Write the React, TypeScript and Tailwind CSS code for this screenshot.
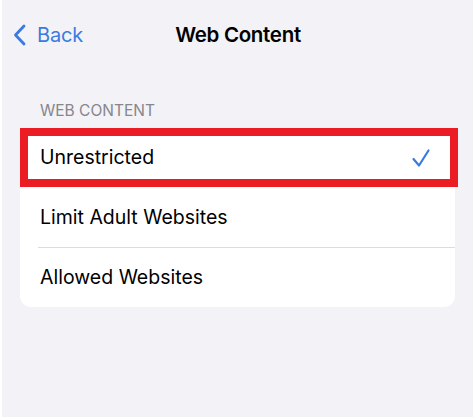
import React from "react";

export default function App() {
  const font = { fontFamily: "Inter, 'Liberation Sans', sans-serif" };
  return (
    <div className="w-[474px] h-[419px] bg-white pl-[2px] pr-[1px] pb-[2px]" style={font}>
      <div className="h-full bg-[#f2f2f7] flex flex-col">
        <div className="relative h-[70px] flex items-center">
          <div className="flex items-center pl-[10px] text-[#3a7be0]">
            <svg width="16" height="24" viewBox="0 0 16 24" className="mr-[9px]">
              <path d="M12 3 L3.5 12 L12 21" fill="none" stroke="#3a7be0" strokeWidth="2.8" strokeLinecap="round" strokeLinejoin="round" />
            </svg>
            <span className="text-[20px] leading-none tracking-[-0.2px]">Back</span>
          </div>
          <div className="absolute left-0 right-0 flex justify-center pl-[1px]">
            <span className="text-[20.5px] font-semibold text-black leading-none tracking-[-0.3px]">Web Content</span>
          </div>
        </div>
        <div className="pl-[38px] pt-[33px] pb-[9px] text-[15.5px] text-[#86868b] leading-none">WEB CONTENT</div>
        <div className="ml-[18px] mr-[18px] bg-white rounded-[11px] flex flex-col">
          <div className="h-[59px] border-[8px] border-[#ec1c24] flex items-center justify-between pl-[12px] pr-[19px] -mr-[3px]">
            <span className="text-[19.5px] text-black pt-[2px]">Unrestricted</span>
            <svg width="20" height="20" viewBox="0 0 20 20" className="mt-[2px]">
              <path d="M2.5 11 L8 17.5 L17.5 2.5" fill="none" stroke="#3a7be0" strokeWidth="2.2" strokeLinecap="round" strokeLinejoin="round" />
            </svg>
          </div>
          <div className="h-[60px] flex items-center pl-[20px]">
            <span className="text-[19.5px] text-black pt-[2px]">Limit Adult Websites</span>
          </div>
          <div className="ml-[18px] h-px bg-[#dcdce0]" />
          <div className="h-[59px] flex items-center pl-[20px]">
            <span className="text-[19.5px] text-black pt-[2px]">Allowed Websites</span>
          </div>
        </div>
      </div>
    </div>
  );
}
